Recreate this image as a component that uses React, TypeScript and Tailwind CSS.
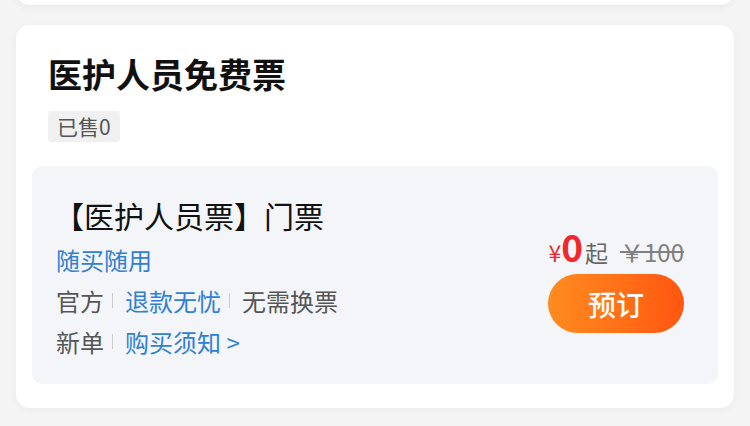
import React from "react";

const font = { fontFamily: '"Noto Sans CJK SC", "Noto Sans", sans-serif' };

function Sep() {
  return <span className="inline-block w-px h-[15px] bg-[#cccccc] ml-[8px] mr-[12px]" />;
}

export default function App() {
  return (
    <div className="w-[750px] h-[426px] overflow-hidden bg-[#f4f4f4]" style={font}>
      <div className="mx-4 -mt-[35px] h-[40px] rounded-[14px] bg-white shadow-[0_2px_8px_rgba(0,0,0,0.05)]" />
      <div className="mx-4 mt-[20px] rounded-[14px] bg-white px-4 pt-[27px] pb-[24px] shadow-[0_2px_8px_rgba(0,0,0,0.04)]">
        <div className="px-4">
          <div className="h-[43px] flex items-center text-[34px] font-bold text-[#111] leading-none">医护人员免费票</div>
          <div className="mt-[16px] inline-flex items-center h-[31px] px-[9px] rounded-[4px] bg-[#f0f0f0] text-[21px] text-[#555] leading-none">已售0</div>
        </div>
        <div className="mt-[24px] h-[218px] rounded-[10px] bg-[#f3f5f8] flex justify-between pl-[24px] pr-[34px] pt-[29px]">
          <div className="flex flex-col">
            <div className="h-[40px] flex items-center text-[30px] text-[#111] leading-none -ml-[2px]">【医护人员票】门票</div>
            <div className="h-[41px] mt-[4px] flex items-center text-[24px] text-[#2f7fd6] leading-none">随买随用</div>
            <div className="h-[41px] flex items-center text-[24px] text-[#555] leading-none">
              <span>官方</span>
              <Sep />
              <span className="text-[#2f7fd6]">退款无忧</span>
              <Sep />
              <span>无需换票</span>
            </div>
            <div className="h-[41px] flex items-center text-[24px] text-[#555] leading-none">
              <span>新单</span>
              <Sep />
              <span className="text-[#2f7fd6]">购买须知 &gt;</span>
            </div>
          </div>
          <div className="flex flex-col items-end">
            <div className="mt-[33px] h-[36px] flex items-baseline leading-none">
              <span className="text-[23px] text-[#f0282d]">¥</span>
              <span className="text-[37px] font-semibold text-[#f0282d]">0</span>
              <span className="text-[23px] text-[#666] ml-[2px]">起</span>
              <span className="text-[24px] text-[#808080] ml-[12px] line-through">￥100</span>
            </div>
            <div className="mt-[10px] w-[136px] h-[59px] rounded-full bg-gradient-to-r from-[#ff8b1e] to-[#ff5511] flex items-center justify-center text-[28px] text-white font-medium leading-none">
              预订
            </div>
          </div>
        </div>
      </div>
    </div>
  );
}
